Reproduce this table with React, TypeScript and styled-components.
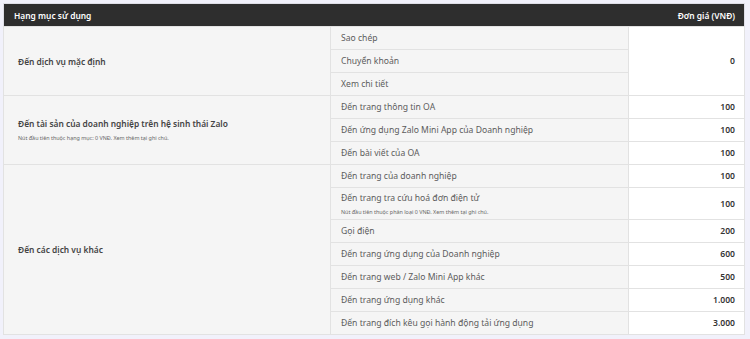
import React from "react";
import styled, { createGlobalStyle } from "styled-components";

const GlobalStyle = createGlobalStyle`
  html, body {
    margin: 0;
    padding: 0;
    background: #f1f1fb;
    font-family: "Noto Sans", "Liberation Sans", sans-serif;
  }
`;

const Page = styled.div`
  padding: 3px 6px 5px 3px;
`;

const Table = styled.table`
  width: 741px;
  border-collapse: collapse;
  table-layout: fixed;
  border: 1px solid #dedee6;
  font-size: 8.6px;
  color: #5c5c5c;
`;

const HeadCell = styled.th<{ $right?: boolean }>`
  height: 22px;
  padding: 0 ${(p) => (p.$right ? "9px" : "10px")};
  background: #2e2e2e;
  color: #fff;
  font-weight: 600;
  font-size: 8.4px;
  text-align: ${(p) => (p.$right ? "right" : "left")};
  border: none;
`;

const GroupCell = styled.td`
  background: #f5f5f5;
  border: 1px solid #e2e2e2;
  padding: 0 14px;
  vertical-align: middle;
  .label {
    font-weight: 600;
    color: #444;
    font-size: 8.4px;
  }
  .note {
    margin-top: 5px;
    font-size: 5.4px;
    color: #666;
  }
`;

const ItemCell = styled.td<{ $tall?: boolean }>`
  height: ${(p) => (p.$tall ? "31px" : "22px")};
  background: #f5f5f5;
  border: 1px solid #e2e2e2;
  padding: 0 10px;
  white-space: nowrap;
  .note {
    margin-top: 4px;
    font-size: 5.4px;
    color: #666;
  }
`;

const PriceCell = styled.td`
  background: #fff;
  border: 1px solid #e2e2e2;
  padding: 0 9px;
  text-align: right;
  font-weight: 600;
  color: #333;
`;

interface Item {
  name: string;
  note?: string;
  price?: string;
}

interface Group {
  label: string;
  note?: string;
  sharedPrice?: string;
  items: Item[];
}

const groups: Group[] = [
  {
    label: "Đến dịch vụ mặc định",
    sharedPrice: "0",
    items: [{ name: "Sao chép" }, { name: "Chuyển khoản" }, { name: "Xem chi tiết" }],
  },
  {
    label: "Đến tài sản của doanh nghiệp trên hệ sinh thái Zalo",
    note: "Nút đầu tiên thuộc hạng mục: 0 VNĐ. Xem thêm tại ghi chú.",
    items: [
      { name: "Đến trang thông tin OA", price: "100" },
      { name: "Đến ứng dụng Zalo Mini App của Doanh nghiệp", price: "100" },
      { name: "Đến bài viết của OA", price: "100" },
    ],
  },
  {
    label: "Đến các dịch vụ khác",
    items: [
      { name: "Đến trang của doanh nghiệp", price: "100" },
      {
        name: "Đến trang tra cứu hoá đơn điện tử",
        note: "Nút đầu tiên thuộc phân loại 0 VNĐ. Xem thêm tại ghi chú.",
        price: "100",
      },
      { name: "Gọi điện", price: "200" },
      { name: "Đến trang ứng dụng của Doanh nghiệp", price: "600" },
      { name: "Đến trang web / Zalo Mini App khác", price: "500" },
      { name: "Đến trang ứng dụng khác", price: "1.000" },
      { name: "Đến trang đích kêu gọi hành động tải ứng dụng", price: "3.000" },
    ],
  },
];

const App: React.FC = () => {
  return (
    <Page>
      <GlobalStyle />
      <Table>
        <colgroup>
          <col style={{ width: 327 }} />
          <col style={{ width: 298 }} />
          <col style={{ width: 116 }} />
        </colgroup>
        <thead>
          <tr>
            <HeadCell colSpan={2}>Hạng mục sử dụng</HeadCell>
            <HeadCell $right>Đơn giá (VNĐ)</HeadCell>
          </tr>
        </thead>
        <tbody>
          {groups.map((g) =>
            g.items.map((item, i) => (
              <tr key={g.label + item.name}>
                {i === 0 && (
                  <GroupCell rowSpan={g.items.length}>
                    <div className="label">{g.label}</div>
                    {g.note && <div className="note">{g.note}</div>}
                  </GroupCell>
                )}
                <ItemCell $tall={!!item.note}>
                  <div>{item.name}</div>
                  {item.note && <div className="note">{item.note}</div>}
                </ItemCell>
                {g.sharedPrice !== undefined ? (
                  i === 0 && (
                    <PriceCell rowSpan={g.items.length}>{g.sharedPrice}</PriceCell>
                  )
                ) : (
                  <PriceCell>{item.price}</PriceCell>
                )}
              </tr>
            ))
          )}
        </tbody>
      </Table>
    </Page>
  );
};

export default App;
